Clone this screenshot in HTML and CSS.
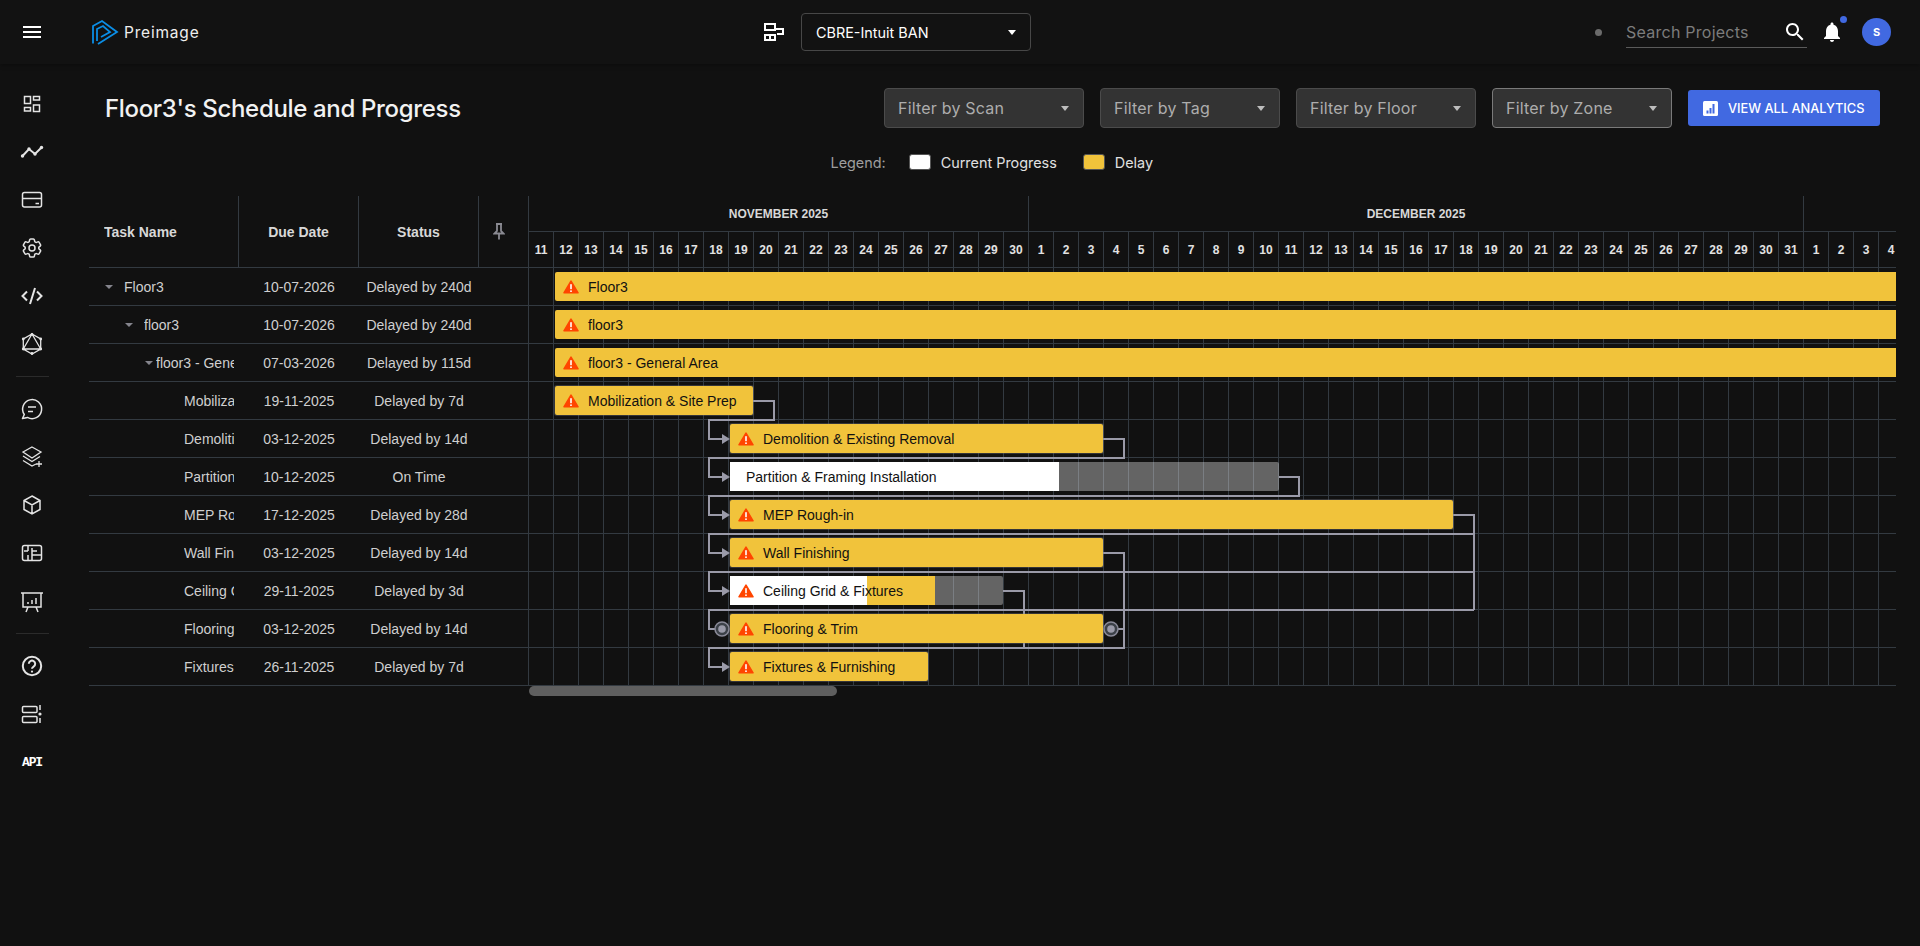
FILE: index.html
```html
<!DOCTYPE html>
<html lang="en">

<head>
    <meta charset="UTF-8">
    <title>Floor3's Schedule and Progress</title>
    <link rel="stylesheet" href="styles.css">
</head>

<body>
    <svg class="icon-defs" width="0" height="0">
        <symbol id="warn" viewBox="0 0 16 14">
            <path d="M8 1.2 L15 12.8 H1 Z" fill="#ff4500" stroke="#ff4500" stroke-width="1.6" stroke-linejoin="round" />
            <rect x="7.2" y="4.2" width="1.6" height="5" fill="#fff" />
            <rect x="7.2" y="10.4" width="1.6" height="1.6" fill="#fff" />
        </symbol>
    </svg>

    <header class="topbar">
        <button class="menu-button" aria-label="Menu">
            <span></span><span></span><span></span>
        </button>
        <div class="brand">
            <svg width="30" height="28" viewBox="0 0 30 28" fill="none" stroke="#0b8ee6" stroke-width="1.8">
                <path d="M3 25.5 V8 L12 3 L27 14 L8 26" />
                <path d="M7 23 V11 L13 8 L20 14 L11 19" />
            </svg>
            <span class="brand-name">Preimage</span>
        </div>
        <div class="project-group">
            <svg width="20" height="18" viewBox="0 0 20 18" fill="none" stroke="#fff" stroke-width="2">
                <rect x="1" y="1" width="10" height="6" />
                <path d="M11 6 H19 V11 H13" />
                <rect x="1" y="12" width="10" height="5" />
                <path d="M6 12 V17" />
            </svg>
            <div class="project-select">
                <span>CBRE-Intuit BAN</span>
                <i class="caret caret-white"></i>
            </div>
        </div>
        <div class="topbar-right">
            <span class="status-dot"></span>
            <div class="search-field">
                <span class="search-text">Search Projects</span>
                <svg width="24" height="24" viewBox="0 0 24 24" fill="#fff">
                    <path d="M15.5 14h-.79l-.28-.27C15.41 12.59 16 11.11 16 9.5 16 5.91 13.09 3 9.5 3S3 5.91 3 9.5 5.91 16 9.5 16c1.61 0 3.09-.59 4.23-1.57l.27.28v.79l5 4.99L20.49 19l-4.99-5zm-6 0C7.01 14 5 11.99 5 9.5S7.01 5 9.5 5 14 7.01 14 9.5 11.99 14 9.5 14z" />
                </svg>
            </div>
            <div class="bell">
                <svg width="24" height="24" viewBox="0 0 24 24" fill="#fff">
                    <path d="M12 22c1.1 0 2-.9 2-2h-4c0 1.1.9 2 2 2zm6-6v-5c0-3.07-1.63-5.64-4.5-6.32V4c0-.83-.67-1.5-1.5-1.5s-1.5.67-1.5 1.5v.68C7.64 5.36 6 7.92 6 11v5l-2 2v1h16v-1l-2-2z" />
                </svg>
                <span class="bell-badge"></span>
            </div>
            <div class="avatar">S</div>
        </div>
    </header>

    <div class="layout">
        <nav class="sidebar">
            <a class="nav-item">
                <svg viewBox="0 0 32 32">
                    <rect x="8.5" y="8.5" width="6" height="7" />
                    <rect x="17.5" y="8.5" width="6" height="3.5" />
                    <rect x="8.5" y="19.5" width="6" height="3.5" />
                    <rect x="17.5" y="17" width="6" height="6.5" />
                </svg>
            </a>
            <a class="nav-item">
                <svg class="thick" viewBox="0 0 32 32">
                    <path d="M6.5 20 L13 13 L19 18 L25.5 11.5" stroke-linecap="round" />
                    <circle class="solid" cx="6.5" cy="20" r="1.7" />
                    <circle class="solid" cx="13" cy="13" r="1.7" />
                    <circle class="solid" cx="19" cy="18" r="1.7" />
                    <circle class="solid" cx="25.5" cy="11.5" r="1.7" />
                </svg>
            </a>
            <a class="nav-item">
                <svg viewBox="0 0 32 32">
                    <rect x="6.5" y="8.5" width="19" height="14.5" rx="2" />
                    <path d="M7 14.5 H25 M19.5 19.5 H23" />
                </svg>
            </a>
            <a class="nav-item">
                <svg viewBox="-4 -4 32 32">
                    <path d="M9.594 3.94c.09-.542.56-.94 1.11-.94h2.593c.55 0 1.02.398 1.11.94l.213 1.281c.063.374.313.686.645.87.074.04.147.083.22.127.324.196.72.257 1.075.124l1.217-.456a1.125 1.125 0 011.37.49l1.296 2.247a1.125 1.125 0 01-.26 1.431l-1.003.827c-.293.24-.438.613-.431.992a6.759 6.759 0 010 .255c-.007.378.138.75.43.99l1.005.828c.424.35.534.954.26 1.43l-1.298 2.247a1.125 1.125 0 01-1.369.491l-1.217-.456c-.355-.133-.75-.072-1.076.124a6.57 6.57 0 01-.22.128c-.331.183-.581.495-.644.869l-.213 1.28c-.09.543-.56.941-1.11.941h-2.594c-.55 0-1.02-.398-1.11-.94l-.213-1.281c-.062-.374-.312-.686-.644-.87a6.52 6.52 0 01-.22-.127c-.325-.196-.72-.257-1.076-.124l-1.217.456a1.125 1.125 0 01-1.369-.49l-1.297-2.247a1.125 1.125 0 01.26-1.431l1.004-.827c.292-.24.437-.613.43-.992a6.932 6.932 0 010-.255c.007-.378-.138-.75-.43-.99l-1.004-.828a1.125 1.125 0 01-.26-1.43l1.297-2.247a1.125 1.125 0 011.37-.491l1.216.456c.356.133.751.072 1.076-.124.072-.044.146-.087.22-.128.332-.183.582-.495.644-.869l.214-1.281z" />
                    <circle cx="12" cy="12" r="3" />
                </svg>
            </a>
            <a class="nav-item">
                <svg class="thick" viewBox="0 0 32 32">
                    <path d="M11 11.5 L6.5 16 L11 20.5 M19 8 L14 24 M21 11.5 L25.5 16 L21 20.5" />
                </svg>
            </a>
            <a class="nav-item">
                <svg class="thin" viewBox="0 0 32 32">
                    <path d="M16 6 L24.7 11 V21 L16 26 L7.3 21 V11 Z M16 6 L24.7 21 H7.3 Z" />
                    <circle class="solid" cx="16" cy="6.5" r="1.4" />
                    <circle class="solid" cx="24.7" cy="11" r="1.4" />
                    <circle class="solid" cx="24.7" cy="21" r="1.4" />
                    <circle class="solid" cx="16" cy="25.5" r="1.4" />
                    <circle class="solid" cx="7.3" cy="21" r="1.4" />
                    <circle class="solid" cx="7.3" cy="11" r="1.4" />
                </svg>
            </a>
            <hr class="nav-divider">
            <a class="nav-item">
                <svg viewBox="0 0 32 32">
                    <path d="M8.3 21.5 A9.5 9.5 0 1 1 11.5 24.4 L6.5 25.5 Z" stroke-linejoin="round" />
                    <path d="M12 14 H20 M12 18.5 H17" />
                </svg>
            </a>
            <a class="nav-item">
                <svg class="thin" viewBox="0 0 32 32">
                    <path d="M16 6 L25 11 L16 17 L7 11 Z M7 15 L16 20.5 L24 15.5 M7 19.5 L16 25 L20 23 M23 20 V26 M20 23 H26" />
                </svg>
            </a>
            <a class="nav-item">
                <svg viewBox="0 0 32 32">
                    <path d="M16 7 L24 11.5 V20.5 L16 25 L8 20.5 V11.5 Z M8 11.5 L16 16 L24 11.5 M16 16 V25" />
                </svg>
            </a>
            <a class="nav-item">
                <svg viewBox="0 0 32 32">
                    <rect x="6.5" y="8.5" width="19" height="15" rx="2" />
                    <path d="M12 8.5 V14 M8 14 H12 M16 11 V23 M16 14 H21 M16 18 H25 M12 18 V23" />
                </svg>
            </a>
            <a class="nav-item">
                <svg viewBox="0 0 32 32">
                    <path d="M5 8 H27 M7 8 V22 H25 V8 M12 19 V17 M16 19 V15 M20 19 V13 M12 22 L10 27 M20 22 L22 27" />
                </svg>
            </a>
            <hr class="nav-divider">
            <a class="nav-item">
                <svg class="thick" viewBox="0 0 32 32">
                    <circle cx="16" cy="16" r="9.2" />
                    <path d="M12.8 13.8 a3.2 3.2 0 1 1 4.8 2.8 c-1 .6 -1.6 1.1 -1.6 2.2" />
                    <circle class="solid" cx="16" cy="21.6" r="1.1" />
                </svg>
            </a>
            <a class="nav-item">
                <svg viewBox="0 0 32 32">
                    <rect x="6.5" y="8.5" width="14.5" height="6" rx="1" />
                    <rect x="6.5" y="18.5" width="14.5" height="6" rx="1" />
                    <path d="M24 7 V12 M24 20 V25" />
                    <circle class="solid" cx="24" cy="16" r="1.6" />
                </svg>
            </a>
            <a class="nav-item"><span class="nav-api">API</span></a>
        </nav>

        <main class="content">
            <div class="page-head">
                <h1 class="page-title">Floor3's Schedule and Progress</h1>
                <div class="filters">
                    <div class="filter filter-scan"><span>Filter by Scan</span><i class="caret"></i></div>
                    <div class="filter"><span>Filter by Tag</span><i class="caret"></i></div>
                    <div class="filter"><span>Filter by Floor</span><i class="caret"></i></div>
                    <div class="filter filter-zone"><span>Filter by Zone</span><i class="caret"></i></div>
                    <button class="analytics-button">
                        <svg width="15" height="15" viewBox="0 0 15 15">
                            <rect width="15" height="15" rx="1.5" fill="#fff" />
                            <path d="M3.5 9.5 h2 v3 h-2 z M6.5 7 h2 v5.5 h-2 z M9.5 3 h2 v9.5 h-2 z" fill="#4169e1" />
                        </svg>
                        VIEW ALL ANALYTICS
                    </button>
                </div>
            </div>

            <div class="legend">
                <span class="legend-label">Legend:</span>
                <i class="swatch swatch-white"></i><span class="legend-name">Current Progress</span>
                <i class="swatch swatch-yellow"></i><span class="legend-name">Delay</span>
            </div>

            <section class="gantt">
                <div class="task-table">
                    <div class="task-head">
                        <div class="col-name"><span class="name-text">Task Name</span></div>
                        <div class="col-date">Due Date</div>
                        <div class="col-status">Status</div>
                        <div class="col-pin">
                            <svg width="12" height="17" viewBox="0 0 12 17" fill="none" stroke="#8a8a92" stroke-width="1.8">
                                <path d="M3 1 H9 M4 1 V8 L1.5 10.5 H10.5 L8 8 V1 M6 10.5 V16.5" />
                            </svg>
                        </div>
                    </div>
                    <div class="task-row">
                        <div class="col-name level-0"><i class="tree-caret"></i><span class="name-text">Floor3</span></div>
                        <div class="col-date">10-07-2026</div>
                        <div class="col-status">Delayed by 240d</div>
                    </div>
                    <div class="task-row">
                        <div class="col-name level-1"><i class="tree-caret"></i><span class="name-text">floor3</span></div>
                        <div class="col-date">10-07-2026</div>
                        <div class="col-status">Delayed by 240d</div>
                    </div>
                    <div class="task-row">
                        <div class="col-name level-2"><i class="tree-caret"></i><span class="name-text">floor3 - General Area</span></div>
                        <div class="col-date">07-03-2026</div>
                        <div class="col-status">Delayed by 115d</div>
                    </div>
                    <div class="task-row">
                        <div class="col-name level-3"><span class="name-text">Mobilization &amp; Site Prep</span></div>
                        <div class="col-date">19-11-2025</div>
                        <div class="col-status">Delayed by 7d</div>
                    </div>
                    <div class="task-row">
                        <div class="col-name level-3"><span class="name-text">Demolition &amp; Existing Removal</span></div>
                        <div class="col-date">03-12-2025</div>
                        <div class="col-status">Delayed by 14d</div>
                    </div>
                    <div class="task-row">
                        <div class="col-name level-3"><span class="name-text">Partition &amp; Framing Installation</span></div>
                        <div class="col-date">10-12-2025</div>
                        <div class="col-status">On Time</div>
                    </div>
                    <div class="task-row">
                        <div class="col-name level-3"><span class="name-text">MEP Rough-in</span></div>
                        <div class="col-date">17-12-2025</div>
                        <div class="col-status">Delayed by 28d</div>
                    </div>
                    <div class="task-row">
                        <div class="col-name level-3"><span class="name-text">Wall Finishing</span></div>
                        <div class="col-date">03-12-2025</div>
                        <div class="col-status">Delayed by 14d</div>
                    </div>
                    <div class="task-row">
                        <div class="col-name level-3"><span class="name-text">Ceiling Grid &amp; Fixtures</span></div>
                        <div class="col-date">29-11-2025</div>
                        <div class="col-status">Delayed by 3d</div>
                    </div>
                    <div class="task-row">
                        <div class="col-name level-3"><span class="name-text">Flooring &amp; Trim</span></div>
                        <div class="col-date">03-12-2025</div>
                        <div class="col-status">Delayed by 14d</div>
                    </div>
                    <div class="task-row">
                        <div class="col-name level-3"><span class="name-text">Fixtures &amp; Furnishing</span></div>
                        <div class="col-date">26-11-2025</div>
                        <div class="col-status">Delayed by 7d</div>
                    </div>
                </div>

                <div class="chart">
                    <div class="month-row">
                        <div class="month month-nov">NOVEMBER 2025</div>
                        <div class="month month-dec">DECEMBER 2025</div>
                        <div class="month month-jan"></div>
                    </div>
                    <div class="day-row">
                        <span>11</span><span>12</span><span>13</span><span>14</span><span>15</span><span>16</span><span>17</span><span>18</span><span>19</span><span>20</span>
                        <span>21</span><span>22</span><span>23</span><span>24</span><span>25</span><span>26</span><span>27</span><span>28</span><span>29</span><span>30</span>
                        <span>1</span><span>2</span><span>3</span><span>4</span><span>5</span><span>6</span><span>7</span><span>8</span><span>9</span><span>10</span>
                        <span>11</span><span>12</span><span>13</span><span>14</span><span>15</span><span>16</span><span>17</span><span>18</span><span>19</span><span>20</span>
                        <span>21</span><span>22</span><span>23</span><span>24</span><span>25</span><span>26</span><span>27</span><span>28</span><span>29</span><span>30</span><span>31</span>
                        <span>1</span><span>2</span><span>3</span><span>4</span>
                    </div>

                    <div class="chart-body">
                        <!-- y = 38 per row, arrows land on the middle of the row -->
                        <svg class="links" width="1368" height="418" viewBox="0 0 1368 418" fill="none" stroke="#9a9aa8" stroke-width="2">
                            <path d="M225 133 H246 V152 H181 V171 H196" />
                            <path d="M575 171 H596 V190 H181 V209 H196" />
                            <path d="M751 209 H771 V228 H181 V247 H196" />
                            <path d="M925 247 H946 V266 H181 V285 H196" />
                            <path d="M946 266 V342 M946 304 H181 V323 H196" />
                            <path d="M946 342 H181 V361 H190" />
                            <path d="M575 285 H596 V380 H181 V399 H196" />
                            <path d="M475 323 H496 V380" />
                            <path d="M588 361 H596" />
                            <g fill="#9a9aa8" stroke="none">
                                <path d="M194 166 L202 171 L194 176 Z" />
                                <path d="M194 204 L202 209 L194 214 Z" />
                                <path d="M194 242 L202 247 L194 252 Z" />
                                <path d="M194 280 L202 285 L194 290 Z" />
                                <path d="M194 318 L202 323 L194 328 Z" />
                                <path d="M194 394 L202 399 L194 404 Z" />
                            </g>
                            <g fill="#3c4148" stroke="#8a8a98" stroke-width="1.5">
                                <circle cx="194" cy="361" r="7" />
                                <circle cx="583" cy="361" r="7" />
                            </g>
                            <g fill="#9a9aa8" stroke="none">
                                <circle cx="194" cy="361" r="3.8" />
                                <circle cx="583" cy="361" r="3.8" />
                            </g>
                        </svg>

                        <div class="chart-row">
                            <div class="bar bar-delay" style="margin-left:27px;width:1400px">
                                <svg class="warn"><use href="#warn" /></svg><span>Floor3</span>
                            </div>
                        </div>
                        <div class="chart-row">
                            <div class="bar bar-delay" style="margin-left:27px;width:1400px">
                                <svg class="warn"><use href="#warn" /></svg><span>floor3</span>
                            </div>
                        </div>
                        <div class="chart-row">
                            <div class="bar bar-delay" style="margin-left:27px;width:1400px">
                                <svg class="warn"><use href="#warn" /></svg><span>floor3 - General Area</span>
                            </div>
                        </div>
                        <div class="chart-row">
                            <div class="bar bar-delay bar-task" style="margin-left:27px;width:198px">
                                <svg class="warn"><use href="#warn" /></svg><span>Mobilization &amp; Site Prep</span>
                            </div>
                        </div>
                        <div class="chart-row">
                            <div class="bar bar-delay bar-task" style="margin-left:202px;width:373px">
                                <svg class="warn"><use href="#warn" /></svg><span>Demolition &amp; Existing Removal</span>
                            </div>
                        </div>
                        <div class="chart-row">
                            <div class="bar bar-rest" style="margin-left:202px;width:549px">
                                <i class="fill fill-done" style="width:329px"></i>
                                <span class="bar-text-plain">Partition &amp; Framing Installation</span>
                            </div>
                        </div>
                        <div class="chart-row">
                            <div class="bar bar-delay bar-task" style="margin-left:202px;width:723px">
                                <svg class="warn"><use href="#warn" /></svg><span>MEP Rough-in</span>
                            </div>
                        </div>
                        <div class="chart-row">
                            <div class="bar bar-delay bar-task" style="margin-left:202px;width:373px">
                                <svg class="warn"><use href="#warn" /></svg><span>Wall Finishing</span>
                            </div>
                        </div>
                        <div class="chart-row">
                            <div class="bar bar-rest" style="margin-left:202px;width:273px">
                                <i class="fill fill-done" style="width:137px"></i>
                                <i class="fill fill-late" style="left:137px;width:68px"></i>
                                <svg class="warn"><use href="#warn" /></svg><span>Ceiling Grid &amp; Fixtures</span>
                            </div>
                        </div>
                        <div class="chart-row">
                            <div class="bar bar-delay bar-task" style="margin-left:202px;width:373px">
                                <svg class="warn"><use href="#warn" /></svg><span>Flooring &amp; Trim</span>
                            </div>
                        </div>
                        <div class="chart-row">
                            <div class="bar bar-delay bar-task" style="margin-left:202px;width:198px">
                                <svg class="warn"><use href="#warn" /></svg><span>Fixtures &amp; Furnishing</span>
                            </div>
                        </div>
                    </div>

                    <div class="scroll-track"><div class="scroll-thumb"></div></div>
                </div>
            </section>
        </main>
    </div>
</body>

</html>
```

FILE: styles.css
```css
* {
    box-sizing: border-box;
}

body {
    margin: 0;
    height: 946px;
    overflow: hidden;
    background: #111;
    color: #fff;
    font-family: 'Inter', 'Liberation Sans', sans-serif;
}

.icon-defs {
    position: absolute;
}

/* top bar */
.topbar {
    display: flex;
    align-items: center;
    height: 64px;
    background: #121212;
    box-shadow: 0 2px 4px rgba(0, 0, 0, 0.25);
    position: relative;
}

.menu-button {
    display: flex;
    flex-direction: column;
    gap: 3px;
    width: 64px;
    padding: 0 23px;
    background: none;
    border: none;
}

.menu-button span {
    display: block;
    height: 2px;
    width: 18px;
    background: #fff;
}

.brand {
    display: flex;
    align-items: center;
    width: 700px;
    padding-left: 26px;
    gap: 4px;
}

.brand-name {
    font-size: 15.5px;
    color: #eee;
    letter-spacing: 0.8px;
}

.project-group {
    display: flex;
    align-items: center;
    gap: 17px;
}

.project-select {
    display: flex;
    align-items: center;
    justify-content: space-between;
    width: 230px;
    height: 38px;
    padding: 0 14px 0 14px;
    border: 1px solid #474747;
    border-radius: 4px;
    font-size: 14.4px;
    color: #fff;
}

.caret {
    display: block;
    width: 0;
    height: 0;
    border-left: 4.5px solid transparent;
    border-right: 4.5px solid transparent;
    border-top: 5px solid #bdbdbd;
}

.caret-white {
    border-top-color: #fff;
}

.topbar-right {
    display: flex;
    align-items: center;
    margin-left: auto;
    padding-right: 29px;
}

.status-dot {
    width: 7px;
    height: 7px;
    border-radius: 50%;
    background: #6b6b6b;
    margin-right: 24px;
}

.search-field {
    display: flex;
    align-items: center;
    justify-content: space-between;
    width: 181px;
    height: 30px;
    margin-top: 1px;
    border-bottom: 1px solid #5a5a5a;
}

.search-text {
    font-size: 16px;
    letter-spacing: 0.25px;
    color: #7c7c7c;
}

.bell {
    position: relative;
    width: 24px;
    height: 24px;
    margin-left: 13px;
}

.bell-badge {
    position: absolute;
    top: -4px;
    right: -3px;
    width: 7px;
    height: 7px;
    border-radius: 50%;
    background: #4169e1;
}

.avatar {
    display: flex;
    align-items: center;
    justify-content: center;
    width: 29px;
    height: 28px;
    margin-left: 18px;
    border-radius: 50%;
    background: #4169e1;
    font-size: 11px;
    font-weight: 700;
}

/* sidebar + page */
.layout {
    display: flex;
}

.sidebar {
    display: flex;
    flex-direction: column;
    width: 64px;
    padding-top: 16px;
    flex-shrink: 0;
}

.nav-item {
    display: flex;
    align-items: center;
    justify-content: center;
    height: 48px;
}

.nav-item svg {
    width: 32px;
    height: 32px;
    fill: none;
    stroke: #e4e4e4;
    stroke-width: 1.5;
}

.nav-item svg.thick {
    stroke-width: 2;
}

.nav-item svg.thin {
    stroke-width: 1.3;
}

.nav-item svg .solid {
    fill: #e4e4e4;
    stroke: none;
}

.nav-api {
    font-family: 'Liberation Mono', monospace;
    font-size: 13px;
    font-weight: 700;
    letter-spacing: -1.2px;
    color: #fff;
}

.nav-divider {
    width: 33px;
    height: 1px;
    margin: 8px 0 8px 16px;
    border: none;
    background: #2b2b2b;
}

.content {
    flex: 1;
    padding-top: 24px;
    min-width: 0;
}

.page-head {
    display: flex;
    align-items: center;
    justify-content: space-between;
    height: 40px;
    padding: 0 40px 0 41px;
}

.page-title {
    margin: 0;
    font-size: 24px;
    font-weight: 500;
    letter-spacing: -0.33px;
    color: #f2f2f2;
}

.filters {
    display: flex;
    align-items: center;
    gap: 16px;
}

.filter {
    display: flex;
    align-items: center;
    justify-content: space-between;
    width: 180px;
    height: 40px;
    padding: 0 14px 0 13px;
    background: #333;
    border: 1px solid #4b4b4b;
    border-radius: 4px;
    font-size: 16px;
    letter-spacing: 0.2px;
    color: #adadad;
}

.filter-scan {
    width: 200px;
}

.filter-zone {
    border-color: #7a7a7a;
}

.analytics-button {
    display: flex;
    align-items: center;
    gap: 10px;
    width: 192px;
    height: 36px;
    padding: 0 15px;
    background: #4169e1;
    border: none;
    border-radius: 3px;
    font-family: inherit;
    font-size: 12.8px;
    font-weight: 500;
    color: #fff;
    white-space: nowrap;
}

.legend {
    display: flex;
    align-items: center;
    justify-content: flex-end;
    height: 68px;
    padding-right: 767px;
    font-size: 14.4px;
}

.legend-label {
    color: #9e9e9e;
    margin-right: 23px;
}

.legend-name {
    color: #e0e0e0;
}

.swatch {
    width: 22px;
    height: 16px;
    margin-right: 10px;
    border-radius: 3px;
    border: 1px solid #555;
}

.swatch-white {
    background: #fff;
}

.swatch-yellow {
    background: #f1c33b;
    margin-left: 26px;
}

/* gantt */
.gantt {
    display: flex;
    margin-left: 25px;
    font-family: 'Liberation Sans', Arial, sans-serif;
}

.task-table {
    width: 439px;
    flex-shrink: 0;
}

.task-head,
.task-row {
    display: flex;
    align-items: stretch;
    border-bottom: 1px solid #333a41;
}

.task-head {
    height: 72px;
    font-size: 14px;
    font-weight: 700;
    color: #d8d8d8;
}

.task-row {
    height: 38px;
    font-size: 14px;
    color: #cfcfcf;
}

.col-name,
.col-date,
.col-status {
    display: flex;
    align-items: center;
    white-space: nowrap;
}

.col-name {
    width: 150px;
    padding: 0 5px 0 15px;
}

.name-text {
    flex: 1;
    min-width: 0;
    overflow: hidden;
}

.col-date,
.col-status {
    width: 120px;
    justify-content: center;
}

.task-head .col-name,
.task-head .col-date,
.task-head .col-status {
    border-right: 1px solid #333a41;
}

.col-pin {
    display: flex;
    align-items: center;
    padding-left: 14px;
}

.level-0 {
    padding-left: 16px;
}

.level-1 {
    padding-left: 36px;
}

.level-2 {
    padding-left: 56px;
}

.level-3 {
    padding-left: 95px;
}

.tree-caret {
    flex-shrink: 0;
    width: 0;
    height: 0;
    margin-right: 11px;
    border-left: 4px solid transparent;
    border-right: 4px solid transparent;
    border-top: 4px solid #85858d;
}

.level-2 .tree-caret {
    margin-right: 3px;
}

.chart {
    width: 1368px;
    overflow: hidden;
    flex-shrink: 0;
}

.month-row,
.day-row {
    display: flex;
    height: 36px;
    border-bottom: 1px solid #333a41;
    width: 1400px;
}

.month {
    display: flex;
    align-items: center;
    justify-content: center;
    height: 36px;
    border-left: 1px solid #333a41;
    font-size: 12px;
    font-weight: 700;
    color: #d8d8d8;
}

.month-nov {
    width: 500px;
}

.month-dec {
    width: 775px;
}

.month-jan {
    width: 125px;
}

.day-row span {
    display: flex;
    align-items: center;
    justify-content: center;
    width: 25px;
    flex-shrink: 0;
    border-left: 1px solid #333a41;
    font-size: 12px;
    font-weight: 700;
    color: #e2e2e2;
}

.chart-body {
    position: relative;
    height: 418px;
    background-image:
        linear-gradient(to right, #333a41 1px, transparent 1px),
        linear-gradient(to bottom, transparent 37px, #333a41 37px);
    background-size: 25px 38px;
}

.links {
    position: absolute;
    top: 0;
    left: 0;
}

.chart-row {
    position: relative;
    height: 38px;
    padding-top: 4px;
}

.bar {
    position: relative;
    display: flex;
    align-items: center;
    height: 29px;
    border-radius: 2px;
    font-size: 14px;
    color: #111;
    white-space: nowrap;
}

.bar-delay {
    background: #f1c33b;
}

.bar-task {
    box-shadow: 0 0 0 1px rgba(120, 120, 130, 0.35);
}

.bar-rest {
    background: rgba(255, 255, 255, 0.35);
}

.fill {
    position: absolute;
    top: 0;
    bottom: 0;
    left: 0;
}

.fill-done {
    background: #fff;
}

.fill-late {
    background: #f1c33b;
}

.warn {
    position: relative;
    width: 16px;
    height: 14px;
    margin: 0 9px 0 8px;
    flex-shrink: 0;
}

.bar span {
    position: relative;
}

.bar-text-plain {
    margin-left: 16px;
}

.scroll-track {
    height: 10px;
    padding-left: 1px;
}

.scroll-thumb {
    width: 308px;
    height: 10px;
    border-radius: 5px;
    background: #5f5f5f;
}
```
